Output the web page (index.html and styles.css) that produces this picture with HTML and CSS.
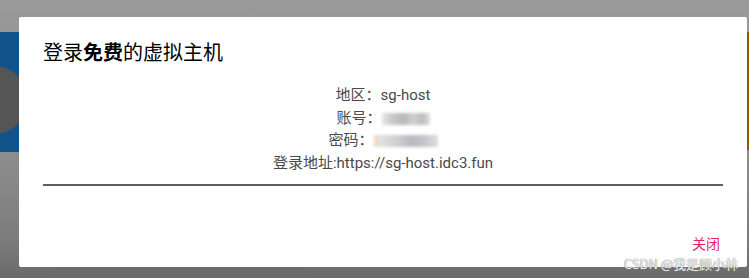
FILE: index.html
```html
<!DOCTYPE html>
<html lang="zh-CN">
<head>
<meta charset="utf-8">
<title>登录免费的虚拟主机</title>
<link rel="stylesheet" href="styles.css">
</head>
<body>
<div class="screen">
  <div class="bg-blue"><div class="bg-circle"></div></div>
  <div class="bg-orange"></div>
  <div class="bg-card"></div>

  <div class="dialog">
    <div class="title">登录<b>免费</b>的虚拟主机</div>
    <div class="content">
      <div class="line">地区：sg-host</div>
      <div class="line">账号：<span class="blur blur-a"></span></div>
      <div class="line">密码：<span class="blur blur-b"></span></div>
      <div class="line">登录地址:https://sg-host.idc3.fun</div>
    </div>
    <div class="rule"></div>
    <div class="actions"><span class="close">关闭</span></div>
  </div>

  <div class="watermark">CSDN @我是顾小林</div>
</div>
</body>
</html>
```

FILE: styles.css
```css
html, body {
  margin: 0;
  padding: 0;
  overflow: hidden;
}
body {
  font-family: Roboto, "Noto Sans CJK SC", "Noto Sans", sans-serif;
}
.screen {
  position: relative;
  width: 749px;
  height: 278px;
  background: linear-gradient(180deg, #9a9a9a 0px, #979797 30px, #8c8c8c 160px, #7c7c7c 240px, #6a6a6a 278px);
  overflow: hidden;
}
.bg-blue {
  position: absolute;
  left: 0;
  top: 32px;
  width: 24px;
  height: 120px;
  background: #13538c;
  overflow: hidden;
}
.bg-circle {
  position: absolute;
  left: -40px;
  top: 34px;
  width: 68px;
  height: 68px;
  border-radius: 50%;
  background: #555;
}
.bg-orange {
  position: absolute;
  right: 0;
  top: 32px;
  width: 6px;
  height: 118px;
  background: #8f5a00;
}
.bg-card {
  position: absolute;
  left: 45px;
  top: 262px;
  width: 270px;
  height: 40px;
  border-radius: 30px 30px 0 0;
  background: #6c6c6c;
}
.dialog {
  position: absolute;
  left: 19px;
  top: 17px;
  width: 728px;
  height: 250px;
  background: #fff;
  border-radius: 2px;
  display: flex;
  flex-direction: column;
}
.title {
  padding: 22px 24px 0;
  font-size: 20px;
  line-height: 28px;
  color: #000;
}
.title b {
  font-weight: 700;
}
.content {
  margin-top: 17px;
  padding: 0 24px;
  text-align: center;
  font-size: 15px;
  line-height: 22.6px;
  color: #4a4a4a;
}
.blur {
  display: inline-block;
  vertical-align: middle;
  height: 12px;
  filter: blur(1.5px);
}
.blur-a {
  width: 48px;
  background: linear-gradient(90deg, #e6e6e6 0%, #c9c9c9 20%, #b8b8b8 45%, #cfcfcf 65%, #bdbdbd 85%, #e0e0e0 100%);
}
.blur-b {
  width: 64px;
  background: linear-gradient(90deg, #f0d9b8 0%, #e2e2e2 10%, #cfcfd4 35%, #b9b9bd 60%, #c6c6cc 80%, #dedee2 100%);
}
.rule {
  margin: 10px 24px 0;
  height: 2px;
  background: #5e5e5e;
}
.actions {
  display: flex;
  justify-content: flex-end;
  padding: 48px 27px 0 0;
}
.close {
  font-size: 14px;
  line-height: 20px;
  color: #e91e63;
}
.watermark {
  position: absolute;
  right: 11px;
  bottom: 7px;
  font-size: 13px;
  line-height: 14px;
  color: rgba(255, 255, 255, 0.85);
  text-shadow: 0 0 1px #8a8a8a, 0 0 1px #8a8a8a;
  font-family: "Noto Sans CJK SC", "Noto Sans", sans-serif;
}
```
